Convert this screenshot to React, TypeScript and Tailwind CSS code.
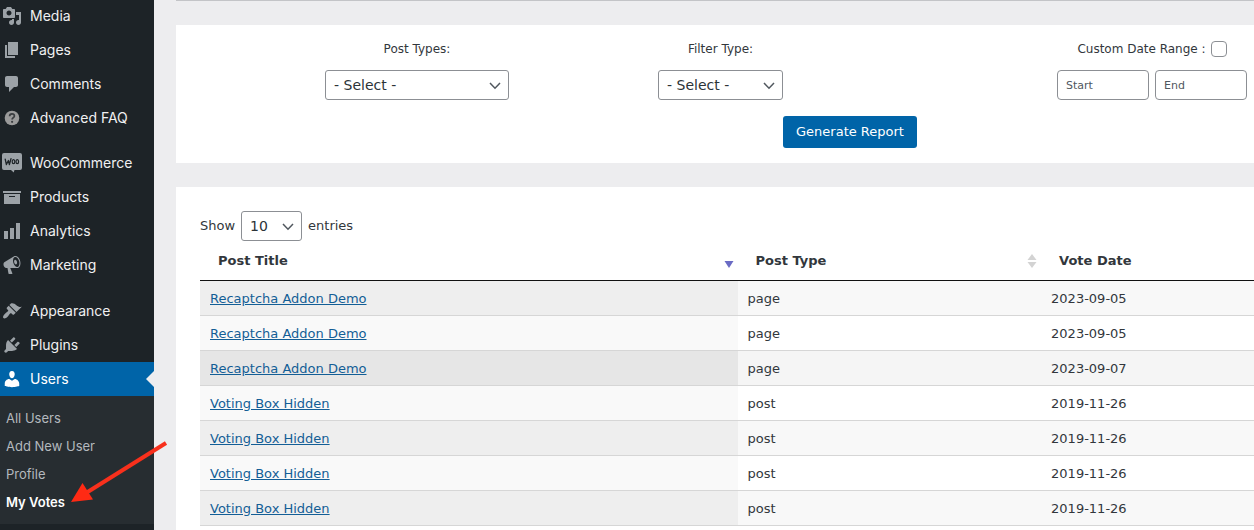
import type { ReactNode } from "react";

type IconProps = { d: string };

function Glyph({ d }: IconProps) {
  return (
    <svg viewBox="0 0 20 20" className="size-5 shrink-0 fill-current" aria-hidden="true">
      <path fillRule="evenodd" d={d} />
    </svg>
  );
}

function HelpGlyph() {
  return (
    <svg viewBox="0 0 20 20" className="size-5 shrink-0" aria-hidden="true">
      <circle cx="10" cy="10" r="7.3" fill="#9a9a9a" />
      <path
        d="M7.6 8.2c0-1.5 1-2.4 2.4-2.4s2.4.9 2.4 2.1c0 1.700-2.300 1.800-2.300 3.700"
        fill="none"
        stroke="#3a3d40"
        strokeWidth="1.700"
      />
      <circle cx="10.100" cy="13.800" r="1.100" fill="#3a3d40" />
    </svg>
  );
}

function WooGlyph() {
  return (
    <svg viewBox="0 0 20 20" className="size-5 shrink-0" aria-hidden="true">
      <path
        d="M2 0h16a2 2 0 0 1 2 2v13a2 2 0 0 1-2 2h-5.500l-.8 2.500L9 17H2a2 2 0 0 1-2-2V2a2 2 0 0 1 2-2z"
        fill="#9ca2a7"
      />
      <path
        d="M3.200 6.200l1.200 5.300 2-4 1 4 1.600-5.800"
        fill="none"
        stroke="#1d2327"
        strokeWidth="1.300"
        strokeLinejoin="round"
        strokeLinecap="round"
      />
      <ellipse cx="11.500" cy="8.700" rx="1.300" ry="2" fill="none" stroke="#1d2327" strokeWidth="1.200" />
      <ellipse cx="15.300" cy="8.700" rx="1.300" ry="2" fill="none" stroke="#1d2327" strokeWidth="1.200" />
    </svg>
  );
}

const paths = {
  media:
    "M13 11V4c0-.55-.45-1-1-1h-1.67L9 1H5L3.67 3H2c-.55 0-1 .45-1 1v7c0 .55.45 1 1 1h10c.55 0 1-.45 1-1zM7 4.5c1.38 0 2.5 1.12 2.5 2.5S8.38 9.5 7 9.5 4.5 8.38 4.5 7 5.62 4.5 7 4.5zM14 6h5v10.5c0 1.38-1.12 2.5-2.5 2.5S14 17.88 14 16.5s1.12-2.5 2.5-2.5c.17 0 .34.02.5.05V9h-3V6zm-4 8.05V13h2v3.5c0 1.38-1.12 2.5-2.5 2.5S7 17.88 7 16.5 8.12 14 9.5 14c.17 0 .34.02.5.05z",
  pages: "M6 15V2h10v13H6zm-1 1h8v2H3V5h2v11z",
  comments:
    "M5 2h9c1.1 0 2 .9 2 2v7c0 1.1-.9 2-2 2h-2l-5 5v-5H5c-1.1 0-2-.9-2-2V4c0-1.1.9-2 2-2z",
  products: "M19 4v2H1V4h18zM2 7h16v10H2V7zm11 3V9H7v1h6z",
  analytics: "M18 18V2h-4v16h4zm-6 0V7H8v11h4zm-6 0v-8H2v8h4z",
  marketing:
    "M18.15 5.94c.46 1.62.38 3.22-.02 4.48-.42 1.28-1.26 2.18-2.3 2.48-.16.06-.26.06-.4.06-.06.02-.12.02-.18.02-.06.02-.14.02-.22.02h-6.8l2.22 5.5c.02.14-.06.26-.14.34-.08.1-.24.16-.34.16H6.95c-.1 0-.26-.06-.34-.16-.08-.08-.16-.2-.14-.34l-1-5.5H4.25l-.02-.02c-.5.06-1.08-.18-1.54-.62s-.88-1.08-1.06-1.88c-.24-.8-.2-1.56-.02-2.2.18-.62.58-1.08 1.06-1.3l.02-.02 9-5.4c.1-.06.18-.1.24-.16.06-.04.14-.08.24-.12.16-.08.28-.12.5-.18 1.04-.3 2.24.1 3.22.98s1.84 2.24 2.26 3.86zm-2.58 5.98h-.02c.4-.1.74-.34 1.04-.7.58-.7.86-1.76.86-3.04 0-.64-.1-1.3-.28-1.98-.34-1.36-1.02-2.5-1.78-3.24s-1.68-1.1-2.46-.88c-.82.22-1.4.96-1.7 2-.32 1.04-.28 2.36.06 3.72.38 1.36 1 2.5 1.8 3.24.78.74 1.62 1.1 2.48.88zm-2.54-7.08c.22-.04.42-.02.62.04.38.16.76.48 1.02 1s.42 1.2.42 1.78c0 .3-.04.56-.12.8-.18.48-.44.84-.86.94-.34.1-.8-.06-1.14-.4s-.64-.86-.78-1.5c-.18-.62-.12-1.24.02-1.72s.48-.84.82-.94z",
  appearance:
    "M14.48 11.06L7.41 3.99l1.5-1.5c.5-.56 2.3-.47 3.51.32 1.21.8 1.43 1.28 2.91 2.1 1.18.64 2.45 1.26 4.45.85zm-.71.71L6.7 4.7 4.93 6.47c-.39.39-.39 1.02 0 1.41l1.06 1.06c.39.39.39 1.03 0 1.42-.6.6-1.43 1.11-2.21 1.69-.35.26-.7.53-1.01.84C1.43 14.23.4 16.08 1.4 17.07c.99 1 2.84-.03 4.18-1.36.31-.31.58-.66.85-1.02.57-.78 1.08-1.61 1.69-2.21.39-.39 1.02-.39 1.41 0l1.06 1.06c.39.39 1.02.39 1.41 0z",
  plugins:
    "M13.11 4.36L9.87 7.6 8 5.73l3.24-3.24c.35-.34 1.05-.2 1.56.32.52.51.66 1.21.31 1.55zm-8 1.77l.91-1.12 9.01 9.01-1.19.84c-.71.71-2.63 1.16-3.82 1.16H6.14L4.9 17.26c-.59.59-1.54.59-2.12 0-.59-.58-.59-1.53 0-2.12l1.24-1.24v-3.88c0-1.13.4-3.19 1.09-3.89zm7.26 3.97l3.24-3.24c.34-.35 1.04-.21 1.55.31.52.51.66 1.21.31 1.55l-3.24 3.25z",
  users:
    "M10 9.25c-2.27 0-2.73-3.44-2.73-3.44C7 4.02 7.82 2 9.97 2c2.16 0 2.98 2.02 2.71 3.81 0 0-.41 3.44-2.68 3.44zm0 2.57L12.72 10c2.39 0 4.52 2.33 4.52 4.53v2.49s-3.65 1.13-7.24 1.13c-3.65 0-7.24-1.13-7.24-1.13v-2.49c0-2.25 1.94-4.48 4.47-4.48z",
};

function MenuItem({ icon, label, current = false }: { icon: ReactNode; label: string; current?: boolean }) {
  return (
    <li>
      <a
        href="#"
        className={
          current
            ? "relative flex h-[34px] items-center gap-2 bg-[#0064a8] pl-0.5 text-sm text-white"
            : "flex h-[34px] items-center gap-2 pl-0.5 text-sm text-[#f0f0f1]"
        }
      >
        <span className={current ? "text-white" : "text-[#9ca2a7]"}>{icon}</span>
        {label}
        {current && (
          <span className="absolute right-0 top-1/2 size-0 -translate-y-1/2 border-y-8 border-r-8 border-y-transparent border-r-[#ededef]" />
        )}
      </a>
    </li>
  );
}

const subItems = ["All Users", "Add New User", "Profile", "My Votes"];

function Sidebar() {
  return (
    <nav className="relative w-[154px] shrink-0 bg-[#1d2327] font-['Inter',sans-serif]">
      <div className="-mt-px flex flex-col gap-[11px]">
        <ul>
          <MenuItem icon={<Glyph d={paths.media} />} label="Media" />
          <MenuItem icon={<Glyph d={paths.pages} />} label="Pages" />
          <MenuItem icon={<Glyph d={paths.comments} />} label="Comments" />
          <MenuItem icon={<HelpGlyph />} label="Advanced FAQ" />
        </ul>
        <ul>
          <MenuItem icon={<WooGlyph />} label="WooCommerce" />
          <MenuItem icon={<Glyph d={paths.products} />} label="Products" />
          <MenuItem icon={<Glyph d={paths.analytics} />} label="Analytics" />
          <MenuItem icon={<Glyph d={paths.marketing} />} label="Marketing" />
        </ul>
        <ul className="pt-px">
          <MenuItem icon={<Glyph d={paths.appearance} />} label="Appearance" />
          <MenuItem icon={<Glyph d={paths.plugins} />} label="Plugins" />
          <MenuItem icon={<Glyph d={paths.users} />} label="Users" current />
          <li>
            <ul className="bg-[#272d31] pb-[7px] pt-[9px]">
              {subItems.map((item) => (
                <li key={item}>
                  <a
                    href="#"
                    className={
                      item === "My Votes"
                        ? "flex h-7 items-center pl-1.5 text-[13px] font-semibold text-white"
                        : "flex h-7 items-center pl-1.5 text-[13px] text-[#b4b9be]"
                    }
                  >
                    {item}
                  </a>
                </li>
              ))}
            </ul>
          </li>
        </ul>
      </div>
      <svg
        viewBox="0 0 100 66"
        className="absolute left-[70px] top-[440px] z-10 h-[66px] w-[100px]"
        aria-hidden="true"
      >
        <path d="M96 3L16 53" stroke="#f8301c" strokeWidth="4" />
        <path d="M1 62L12.500 43L23 59.500z" fill="#ff2a14" />
      </svg>
    </nav>
  );
}

function Select({ id, value, className }: { id: string; value: string; className: string }) {
  return (
    <span className={"relative flex " + className}>
      <select
        id={id}
        className="h-[30px] w-full appearance-none rounded-[3px] border border-[#8c8f94] bg-white pl-2 text-sm text-[#2c3338]"
      >
        <option>{value}</option>
      </select>
      <svg
        viewBox="0 0 12 8"
        className="pointer-events-none absolute right-2 top-3 h-2 w-3"
        fill="none"
        stroke="#50575e"
        strokeWidth="1.500"
        aria-hidden="true"
      >
        <path d="M1 1l5 5.200L11 1" />
      </svg>
    </span>
  );
}

function FilterPanel() {
  return (
    <form className="grid grid-cols-[482fr_125fr_267fr_204fr] bg-white pb-[15px] pt-3 text-[12px]">
      <div className="flex flex-col items-center gap-[9px]">
        <label htmlFor="post-types" className="flex h-6 items-center">
          Post Types:
        </label>
        <Select id="post-types" value="- Select -" className="w-[184px]" />
      </div>
      <div className="flex flex-col items-center gap-[9px]">
        <label htmlFor="filter-type" className="flex h-6 items-center">
          Filter Type:
        </label>
        <Select id="filter-type" value="- Select -" className="w-[125px]" />
      </div>
      <div className="col-start-4 flex flex-col items-center gap-[9px]">
        <label className="flex h-6 items-center gap-[5px] whitespace-nowrap">
          Custom Date Range :
          <input type="checkbox" className="size-4 appearance-none rounded-sm border border-[#8c8f94] bg-white" />
        </label>
        <div className="flex gap-1.5">
          <input
            aria-label="Start"
            placeholder="Start"
            className="h-[30px] w-[92px] rounded border border-[#8c8f94] px-2 text-[11px] placeholder:text-[#50575e]"
          />
          <input
            aria-label="End"
            placeholder="End"
            className="h-[30px] w-[92px] rounded border border-[#8c8f94] px-2 text-[11px] placeholder:text-[#50575e]"
          />
        </div>
      </div>
      <button
        type="button"
        className="col-start-3 mt-4 h-8 w-[134px] justify-self-start whitespace-nowrap rounded-[3px] bg-[#0064a8] text-[13px] text-white"
      >
        Generate Report
      </button>
    </form>
  );
}

const rows = [
  { title: "Recaptcha Addon Demo", type: "page", date: "2023-09-05" },
  { title: "Recaptcha Addon Demo", type: "page", date: "2023-09-05" },
  { title: "Recaptcha Addon Demo", type: "page", date: "2023-09-07", hovered: true },
  { title: "Voting Box Hidden", type: "post", date: "2019-11-26" },
  { title: "Voting Box Hidden", type: "post", date: "2019-11-26" },
  { title: "Voting Box Hidden", type: "post", date: "2019-11-26" },
  { title: "Voting Box Hidden", type: "post", date: "2019-11-26" },
];

function rowColors(index: number, hovered?: boolean) {
  if (hovered) return { row: "bg-[#f5f5f5]", sorted: "bg-[#e6e6e6]" };
  if (index % 2 === 0) return { row: "bg-[#f8f8f8]", sorted: "bg-[#eeeeee]" };
  return { row: "bg-white", sorted: "bg-[#f9f9f9]" };
}

function HeaderCell({ label, sort, className }: { label: string; sort?: "desc" | "none"; className: string }) {
  return (
    <th className={"border-b border-[#111111] pb-2.5 pl-[18px] pr-1 pt-[11px] text-left " + className}>
      <div className="flex items-center justify-between">
        {label}
        {sort && (
          <svg viewBox="0 0 10 16" className="h-4 w-2.5" aria-hidden="true">
            {sort === "none" && <path d="M5 1l4.500 6h-9z" fill="#d3d3d3" />}
            <path d={sort === "none" ? "M5 15l4.500-6h-9z" : "M5 15L9.500 8h-9z"} fill={sort === "none" ? "#d3d3d3" : "#6a6bc4"} />
          </svg>
        )}
      </div>
    </th>
  );
}

function VotesPanel() {
  return (
    <section className="grow bg-white pl-6 pt-6 text-[13px] leading-[18px]">
      <div className="flex items-center gap-1.5">
        <label htmlFor="entries">Show</label>
        <Select id="entries" value="10" className="w-[61px]" />
        <span>entries</span>
      </div>
      <table className="w-full table-fixed border-separate border-spacing-0">
        <thead>
          <tr>
            <HeaderCell label="Post Title" sort="desc" className="w-[51%]" />
            <HeaderCell label="Post Type" sort="none" className="w-[28.8%]" />
            <HeaderCell label="Vote Date" className="" />
          </tr>
        </thead>
        <tbody>
          {rows.map((row, i) => {
            const colors = rowColors(i, row.hovered);
            return (
              <tr key={i} className={colors.row}>
                <td className={"border-b border-[#d6d6d6] px-2.5 pb-[7px] pt-[9px] " + colors.sorted}>
                  <a href="#" className="text-[#135e96] underline">
                    {row.title}
                  </a>
                </td>
                <td className="border-b border-[#d6d6d6] px-2.5 pb-[7px] pt-[9px]">{row.type}</td>
                <td className="border-b border-[#d6d6d6] px-2.5 pb-[7px] pt-[9px]">{row.date}</td>
              </tr>
            );
          })}
        </tbody>
      </table>
    </section>
  );
}

export default function App() {
  return (
    <div className="flex h-screen overflow-hidden bg-[#ededef] font-['DejaVu_Sans',Verdana,sans-serif] text-[#32373c]">
      <Sidebar />
      <main className="ml-[22px] flex min-w-0 grow flex-col gap-6">
        <div className="h-px shrink-0 bg-[#c3c4c7]" />
        <FilterPanel />
        <VotesPanel />
      </main>
    </div>
  );
}
